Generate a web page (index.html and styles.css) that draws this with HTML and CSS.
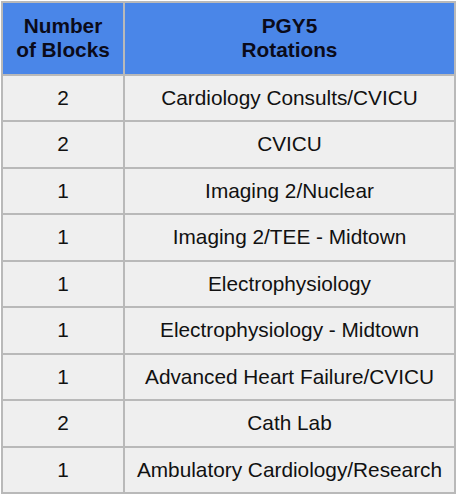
FILE: index.html
```html
<!DOCTYPE html>
<html>
<head>
<meta charset="utf-8">
<link rel="stylesheet" href="styles.css">
</head>
<body>
<div class="wrap">
<table class="rot">
<colgroup><col class="c1"><col class="c2"></colgroup>
<thead>
<tr><th>Number<br>of Blocks</th><th>PGY5<br>Rotations</th></tr>
</thead>
<tbody>
<tr><td>2</td><td>Cardiology Consults/CVICU</td></tr>
<tr><td>2</td><td>CVICU</td></tr>
<tr><td>1</td><td>Imaging 2/Nuclear</td></tr>
<tr><td>1</td><td>Imaging 2/TEE - Midtown</td></tr>
<tr><td>1</td><td>Electrophysiology</td></tr>
<tr><td>1</td><td>Electrophysiology - Midtown</td></tr>
<tr><td>1</td><td>Advanced Heart Failure/CVICU</td></tr>
<tr><td>2</td><td>Cath Lab</td></tr>
<tr><td>1</td><td>Ambulatory Cardiology/Research</td></tr>
</tbody>
</table>
</div>
</body>
</html>
```
FILE: styles.css
```css
html, body {
  margin: 0;
  padding: 0;
  background: #ffffff;
}
.wrap {
  padding: 1px 0 0 1px;
  margin: 0;
}
.rot {
  border-collapse: collapse;
  table-layout: fixed;
  width: 455px;
  font-family: "Liberation Sans", Arial, sans-serif;
  font-size: 20.8px;
  color: #111;
}
.c1 { width: 122px; }
.rot th, .rot td {
  border: 2px solid #b9b9b9;
  text-align: center;
  padding: 0;
}
.rot th {
  background: #4a86e8;
  font-weight: bold;
  line-height: 24px;
  height: 70.5px;
  color: #0b0b1a;
}
.rot td {
  background: #efefef;
  height: 44.5px;
  line-height: 24px;
}
```
